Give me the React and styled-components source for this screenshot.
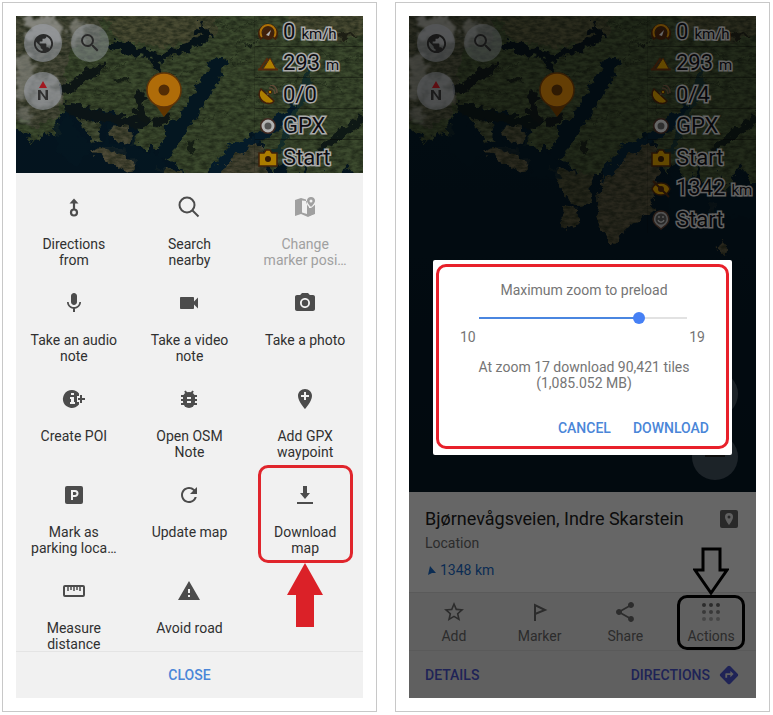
import React, { useId, useState } from "react";
import styled, { createGlobalStyle } from "styled-components";
import {
  MdPublic,
  MdSearch,
  MdMic,
  MdVideocam,
  MdPhotoCamera,
  MdAddLocation,
  MdRefresh,
  MdWarning,
  MdStarOutline,
  MdShare,
  MdDirections,
} from "react-icons/md";

const GlobalStyle = createGlobalStyle`
  *, *::before, *::after { box-sizing: border-box; }
  body {
    margin: 0;
    background: #fff;
    font-family: Roboto, "Liberation Sans", sans-serif;
    font-size: 14px;
    line-height: 16px;
  }
  svg { display: block; }
`;

const PlainButton = styled.button`
  border: 0;
  padding: 0;
  background: none;
  font: inherit;
  color: inherit;
  cursor: pointer;
`;

/* ---------- page ---------- */

const Page = styled.main`
  display: flex;
  gap: 18px;
  padding: 2px 3px 2px 2px;
`;

const Frame = styled.section`
  flex: 1;
  min-width: 0;
  display: flex;
  padding: 13px;
  border: 1px solid #c8c8c8;
`;

const Phone = styled.div`
  position: relative;
  flex: 1;
  min-width: 0;
  display: flex;
  flex-direction: column;
  background: #f1f1f1;
`;

/* ---------- map ---------- */

const MapArea = styled.div`
  position: relative;
  height: ${(p) => p.$height}px;
  overflow: hidden;
  background: #061a28;
`;

const MapSvg = styled.svg`
  width: 100%;
  height: 476px;
`;

const Shade = styled.div`
  position: absolute;
  inset: 0;
  display: flex;
  align-items: center;
  justify-content: center;
  padding: 0 24px;
  background: rgba(0, 0, 0, ${(p) => p.$strength});
`;

const MapControls = styled.div`
  position: absolute;
  top: 8px;
  left: 8px;
  display: grid;
  grid-template-columns: 38px 38px;
  grid-auto-rows: 38px;
  gap: 10px 9px;
`;

const ZoomControls = styled.div`
  position: absolute;
  right: 18px;
  bottom: 12px;
  display: grid;
  grid-auto-rows: 46px;
  grid-template-columns: 46px;
  gap: 17px;
`;

const RoundButton = styled(PlainButton)`
  display: flex;
  align-items: center;
  justify-content: center;
  border-radius: 50%;
  background: rgba(225, 232, 245, ${(p) => p.$alpha || 0.55});
  color: #3c3c3c;
`;

const Widgets = styled.ul`
  position: absolute;
  top: 0;
  right: 0;
  width: 109px;
  margin: 0;
  padding: 0;
  list-style: none;
  border-left: 1px solid rgba(0, 0, 0, 0.15);
`;

const Widget = styled.li`
  display: flex;
  align-items: center;
  gap: 5px;
  height: 31px;
  padding: 4px 0 0 3px;
  border-bottom: ${(p) => (p.$line ? "1px solid rgba(0, 0, 0, 0.35)" : "0")};
  white-space: nowrap;
`;

const WidgetIcon = styled.svg`
  flex: none;
  width: 20px;
  height: 20px;
`;

const WidgetText = styled.span`
  font-size: 22px;
  line-height: 26px;
  color: #14141c;
  -webkit-text-stroke: 3px #f4f4f4;
  paint-order: stroke fill;
`;

const Unit = styled.small`
  margin-left: 6px;
  font-size: 15px;
`;

/* ---------- actions sheet ---------- */

const ActionGrid = styled.div`
  display: grid;
  grid-template-columns: repeat(3, 1fr);
  grid-auto-rows: 96px;
  height: 478px;
`;

const ActionCell = styled.div`
  position: relative;
  display: flex;
`;

const ActionButton = styled(PlainButton)`
  flex: 1;
  display: flex;
  flex-direction: column;
  align-items: center;
  gap: 17px;
  padding-top: 22px;
  color: ${(p) => (p.$muted ? "#a0a0a0" : "#303030")};

  &:disabled { cursor: default; }

  svg {
    width: 24px;
    height: 24px;
    color: ${(p) => (p.$muted ? "#a0a0a0" : "#4c4c4c")};
  }
`;

const ActionLabel = styled.span`
  white-space: pre-line;
`;

const RedOutline = styled.span`
  position: absolute;
  top: 4px;
  left: 11px;
  right: 10px;
  height: 98px;
  border: 3px solid #e0252c;
  border-radius: 10px;
  pointer-events: none;
`;

const RedArrow = styled.svg`
  position: absolute;
  z-index: 1;
  top: 102px;
  left: 50%;
  margin-left: -18px;
  width: 36px;
  height: 65px;
  pointer-events: none;
`;

const SheetFooter = styled.footer`
  flex: 1;
  display: flex;
  min-height: 47px;
  border-top: 1px solid #e4e4e4;
`;

const CloseButton = styled(PlainButton)`
  flex: 1;
  font-weight: 500;
  color: #4a86d8;
`;

/* ---------- location card ---------- */

const Card = styled.div`
  display: flex;
  flex-direction: column;
  background: #fff;
  color: #6e6e6e;
`;

const CardHead = styled.header`
  display: flex;
  justify-content: space-between;
  height: 100px;
  padding: 16px 17px 0 16px;
`;

const CardTitle = styled.h2`
  margin: 0;
  font-size: 18px;
  line-height: 22px;
  font-weight: 400;
  color: #222;
`;

const CardKind = styled.p`
  margin: 5px 0 0;
`;

const Distance = styled.p`
  display: flex;
  align-items: center;
  gap: 4px;
  margin: 11px 0 0;
  padding-left: 3px;
  color: #1c6fd0;
`;

const CardBadge = styled.svg`
  flex: none;
  width: 20px;
  height: 20px;
  margin-top: 1px;
`;

const Tabs = styled.nav`
  display: grid;
  grid-template-columns: repeat(4, 1fr);
  height: 59px;
  padding: 0 2px;
  background: #f1f1f1;
  border-top: 1px solid #e2e2e2;
  border-bottom: 1px solid #e2e2e2;
`;

const Tab = styled(PlainButton)`
  display: flex;
  flex-direction: column;
  align-items: center;
  gap: 4px;
  padding-top: 7px;

  svg {
    width: 24px;
    height: 24px;
    color: #6e6e6e;
  }
`;

const CardFooter = styled.footer`
  display: flex;
  align-items: center;
  justify-content: space-between;
  height: 47px;
  padding: 0 16px;
  background: #f1f1f1;
`;

const CardLink = styled(PlainButton)`
  display: flex;
  align-items: center;
  gap: 8px;
  font-weight: 500;
  color: #4f58d8;

  svg {
    width: 22px;
    height: 22px;
  }
`;

const ActionsMark = styled.div`
  position: absolute;
  right: 11px;
  bottom: 48px;
  width: 68px;
  display: flex;
  flex-direction: column;
  align-items: center;
  pointer-events: none;
`;

const ActionsOutline = styled.span`
  align-self: stretch;
  height: 55px;
  border: 3px solid #000;
  border-radius: 10px;
`;

/* ---------- dialog ---------- */

const Dialog = styled.div`
  flex: 1;
  min-width: 0;
  padding: 4px 3px 6px;
  border-radius: 2px;
  background: #fff;
  color: #757575;
`;

const DialogFrame = styled.div`
  display: flex;
  flex-direction: column;
  height: 185px;
  padding: 15px 17px 0 20px;
  border: 3px solid #e8202a;
  border-radius: 10px;
`;

const DialogTitle = styled.label`
  align-self: center;
  line-height: 16px;
`;

const Slider = styled.input`
  appearance: none;
  height: 12px;
  margin: 14px 20px 0 18px;
  background: linear-gradient(
    to right,
    #4a86e0 ${(p) => p.$fill}%,
    #e2e2e2 ${(p) => p.$fill}%
  ) center / calc(100% - 4px) 2px no-repeat;
  outline: none;

  &::-webkit-slider-thumb {
    appearance: none;
    width: 12px;
    height: 12px;
    border-radius: 50%;
    background: #4680f5;
  }
`;

const SliderEnds = styled.div`
  display: flex;
  justify-content: space-between;
  padding: 0 4px 0 1px;
  margin-top: 5px;
`;

const DialogText = styled.p`
  margin: 14px 0 0;
  text-align: center;
`;

const DialogActions = styled.div`
  display: flex;
  justify-content: flex-end;
  gap: 22px;
  margin-top: 29px;
`;

const DialogButton = styled(PlainButton)`
  font-weight: 500;
  color: #4a86d8;
`;

/* ---------- drawings ---------- */

function SatelliteMap() {
  const id = useId().replace(/[^a-zA-Z0-9]/g, "");
  return (
    <MapSvg viewBox="0 0 347 476" preserveAspectRatio="xMidYMin slice" aria-hidden="true">
      <defs>
        <filter id={`${id}coast`} x="-5%" y="-5%" width="110%" height="110%" colorInterpolationFilters="sRGB">
          <feTurbulence type="fractalNoise" baseFrequency="0.1" numOctaves="4" seed="7" />
          <feDisplacementMap in="SourceGraphic" scale="16" xChannelSelector="R" yChannelSelector="G" result="d" />
          <feTurbulence type="fractalNoise" baseFrequency="0.14 0.3" numOctaves="3" seed="12" />
          <feColorMatrix values="0 0 0 0 0.14  0 0 0 0 0.18  0 0 0 0 0.11  1.4 0 0 0 -0.4" result="n" />
          <feComposite in="n" in2="d" operator="in" result="tex" />
          <feMerge>
            <feMergeNode in="d" />
            <feMergeNode in="tex" />
          </feMerge>
          <feGaussianBlur stdDeviation="0.6" />
        </filter>
        <filter id={`${id}water`} x="-5%" y="-5%" width="110%" height="110%" colorInterpolationFilters="sRGB">
          <feTurbulence type="fractalNoise" baseFrequency="0.12" numOctaves="4" seed="3" />
          <feDisplacementMap in="SourceGraphic" scale="13" xChannelSelector="R" yChannelSelector="G" />
          <feGaussianBlur stdDeviation="0.6" />
        </filter>
        <filter id={`${id}cloud`} x="-20%" y="-20%" width="140%" height="140%" colorInterpolationFilters="sRGB">
          <feTurbulence type="fractalNoise" baseFrequency="0.12" numOctaves="4" seed="5" />
          <feDisplacementMap in="SourceGraphic" scale="24" xChannelSelector="R" yChannelSelector="G" />
          <feGaussianBlur stdDeviation="0.8" />
        </filter>
        <linearGradient id={`${id}sea`} x1="0" y1="0" x2="0" y2="1">
          <stop offset="0" stopColor="#06202f" />
          <stop offset="0.5" stopColor="#061c2b" />
          <stop offset="1" stopColor="#061926" />
        </linearGradient>
      </defs>
      <rect width="347" height="476" fill={`url(#${id}sea)`} />
      <g filter={`url(#${id}coast)`}>
        <path
          fill="#566a42"
          d="M-20-20H370V165L346 168 330 150 322 178 312 158 300 182 290 150 278 172 268 140 258 158 248 128 240 118 222 128 206 142 194 158 172 158 156 146 146 132 152 116 146 132 128 132 118 128 122 106 106 110 98 98 76 96 54 88 48 98 40 106 42 122 27 115 18 127 10 117 -20 104Z"
        />
        <path fill="#626f4c" d="M54 92 70 98 86 112 84 126 76 124 66 110Z" />
        <path fill="#68684c" d="M94 110 112 108 118 120 108 128 92 122Z" />
        <path fill="#706b50" d="M74 132 90 134 106 134 120 148 114 154 96 148 84 142Z" />
        <path fill="#5c5e42" d="M140 148 160 156 182 158 184 178 172 192 160 186 152 172Z" />
        <path fill="#625f44" d="M153 188 168 194 170 208 160 216 154 204Z" />
        <path
          fill="#67634a"
          d="M186 200 190 174 204 148 221 132 238 124 248 132 250 164 240 197 214 216 204 228 194 216Z"
        />
        <path fill="#67634a" d="M300 184 308 186 306 202 300 198ZM312 226 318 230 316 238 310 234Z" />
        <path fill="#7a7050" opacity="0.6" d="M86-10H200V20L160 30 120 28 94 18ZM270-10H350V20L320 24 280 14Z" />
        <path fill="#6c6b55" opacity="0.9" d="M-10-10H90L84 24 56 34 48 60 44 100 20 112 -10 100Z" />
      </g>
      <g filter={`url(#${id}water)`} fill="#07202f">
        <path fill="#0a1a22" d="M94 23 117 31 145 36 165 30 180 20 184 8 194 12 198 22 186 28 170 36 148 42 142 54 136 52 134 42 112 38 94 32Z" />
        <path fill="#141f1e" d="M46 70 58 62 76 52 92 44 84 58 70 66 58 76 46 78Z" />
        <path d="M202 41 211 46 204 60 194 78 184 98 174 111 161 128 153 146 143 138 151 109 164 99 174 80 184 67 194 46Z" />
        <path fill="#101e20" d="M48 86 72 92 98 98 120 100 136 106 124 112 100 108 72 104 50 98Z" />
        <path fill="#141f1e" d="M120 72 132 80 128 92 134 104 124 106 118 96 122 84ZM136 104 152 98 156 104 140 110Z" />
        <path d="M40 108 52 98 60 112 70 128 88 130 90 108 96 108 92 124 108 130 118 122 126 134 148 140 150 162 124 160 112 140 76 130 60 150 40 134Z" opacity="0.8" />
        <path fill="#08283c" d="M192 166 200 146 214 132 240 118 262 98 280 88 276 100 260 116 232 132 216 142 204 158Z" />
        <path fill="#1e3f3c" d="M280 90 288 66 290 40 295 40 293 68 286 92 268 130 258 148 252 146Z" />
        <path fill="#15231f" d="M302 132 318 118 350 96 350 103 322 126 306 137Z" />
        <path fill="#2a2c1e" d="M312 20 328 16 340 18 328 24Z" />
        <path d="M262 164 268 150 274 172 284 158 292 178 304 162 314 180 330 160 350 176 350 200 260 200Z" opacity="0.8" />
        <path fill="#1e2a1e" d="M96 62 104 60 116 64 104 66ZM226 28 242 24 236 32ZM170 128 182 122 176 138Z" />
      </g>
      <g fill="none" stroke="#26331f" strokeWidth="1" opacity="0.6" filter={`url(#${id}water)`}>
        <path d="M190 14 204 6 220 16 238 4M226 20 214 48 236 44M238 60 262 72 290 60 330 76M220 86 240 78 250 98M66 44 90 54 112 48M140 62 160 58 180 54M300 30 320 46 346 40M184 110 200 96 214 100M60 84 80 76 110 80" />
      </g>
      <g fill="#d4d4cc" filter={`url(#${id}cloud)`} opacity="0.8">
        <path d="M12 2 40 0 50 14 42 28 20 26 8 14Z" />
        <path d="M54 2 68 6 70 24 56 28Z" opacity="0.7" />
        <path d="M0 40 14 36 18 60 12 84 0 80Z" opacity="0.7" />
        <path d="M18 58 38 60 46 80 28 94 16 84Z" opacity="0.6" />
        <path d="M2 92 12 90 20 104 10 110Z" opacity="0.5" />
      </g>
      <path d="M139 88H158L148 101Z" fill="#8a4c00" />
      <circle cx="148" cy="74" r="17" fill="#fb9b0e" stroke="#8a4c0c" strokeWidth="1.5" />
      <circle cx="148" cy="74" r="5.5" fill="#774108" />
    </MapSvg>
  );
}

const glyphs = {
  speed: (
    <>
      <path d="M4 16a8 8 0 1 1 12 0" fill="none" stroke="#5c2f10" strokeWidth="4" />
      <path d="M4 14a7.500 7.500 0 1 1 12 0" fill="none" stroke="#f5a30c" strokeWidth="2" />
      <circle cx="10" cy="11" r="6" fill="#5c2f10" />
      <path d="M8 12 13 7 11 13Z" fill="#fff" />
    </>
  ),
  altitude: (
    <>
      <path d="M2 15 9 5 11 7M0 15.500H20" fill="none" stroke="#7a3d14" strokeWidth="2" />
      <path d="M5 15 12 4 18 15Z" fill="#f7b500" stroke="#7a3d14" strokeWidth="1" />
    </>
  ),
  satellite: (
    <>
      <path d="M3 4C-1 9 2 16 8 18c4 1 7 0 8-2Z" fill="#f7b500" stroke="#5c2f10" strokeWidth="1.500" />
      <path d="M9 10 12 7M11 3c4 0 6 3 6 6M12 0c5 0 7 4 7 8" fill="none" stroke="#8a6a50" strokeWidth="1.500" />
      <circle cx="12" cy="7" r="1.800" fill="#f7b500" stroke="#5c2f10" />
    </>
  ),
  record: (
    <>
      <circle cx="10" cy="10" r="6" fill="#777" stroke="#5c3b30" strokeWidth="4" />
      <circle cx="10" cy="10" r="5" fill="#777" stroke="#fff" strokeWidth="3" />
    </>
  ),
  camera: (
    <>
      <path d="M1 5H6L8 2H12L14 5H19V18H1Z" fill="#f5b200" stroke="#5c2f10" strokeWidth="1.500" />
      <circle cx="10" cy="11" r="3" fill="#4b2708" />
    </>
  ),
  target: (
    <>
      <path d="M1 10C4 2 16 2 19 10 16 18 4 18 1 10Z" fill="#f7b500" stroke="#5c2f10" strokeWidth="1.500" />
      <path d="M2 2 18 18" stroke="#5c2f10" strokeWidth="2" />
      <circle cx="10" cy="10" r="3" fill="#5c2f10" />
    </>
  ),
  mood: (
    <>
      <path d="M10 1a8 8 0 0 1 5 14L10 19 5 15A8 8 0 0 1 10 1Z" fill="#ccc" stroke="#6b4a3a" strokeWidth="1.500" />
      <circle cx="10" cy="9" r="5.500" fill="#666" />
      <path d="M8 6v2M12 6v2M7 10c1 3 5 3 6 0" fill="none" stroke="#eee" strokeWidth="1.300" />
    </>
  ),
};

const DirectionsFromIcon = () => (
  <svg viewBox="0 0 24 24" fill="none" stroke="currentColor" strokeWidth="2.200" aria-hidden="true">
    <circle cx="12" cy="17.500" r="3" />
    <path d="M12 15V7" />
    <path d="M12 3.500 16.500 8.500H7.500Z" fill="currentColor" stroke="none" />
  </svg>
);

const MapPinIcon = () => (
  <svg viewBox="0 0 24 24" fill="currentColor" aria-hidden="true">
    <path d="M2 5 8 3 13 4.500C13 8 14 10 16 12V20L22 17V10L21 11V19L15 22 8 19 2 21ZM9 5.500V17.500L14 19V6Z" fillRule="evenodd" />
    <path d="M18 2a3.800 3.800 0 0 1 4 4c0 2-4 6-4 6s-4-4-4-6a3.800 3.800 0 0 1 4-4Zm0 2.500a1.500 1.500 0 1 0 0 3 1.500 1.500 0 0 0 0-3Z" fillRule="evenodd" />
    <path d="M16 13H18L22 10V19L16 21Z" />
  </svg>
);

const PoiIcon = () => (
  <svg viewBox="0 0 24 24" fill="currentColor" aria-hidden="true">
    <path d="M10 3a9 9 0 0 1 7 3.500V9h-2v6h2v2.500A9 9 0 1 1 10 3Z" />
    <path d="M9 6h3v2H9ZM8 10h4v5h1v2H8v-2h1v-3H8Z" fill="#f1f1f1" />
    <path d="M18 8h2v3h3v2h-3v3h-2v-3h-2v-2h2Z" />
  </svg>
);

const BugIcon = () => (
  <svg viewBox="0 0 24 24" aria-hidden="true">
    <path d="M4 9H20M4 13H20M4 17H20M8 4 10 7M16 4 14 7" fill="none" stroke="currentColor" strokeWidth="2" />
    <path d="M12 5a6 5 0 0 1 6 5v5a6 6 0 0 1-12 0v-5a6 5 0 0 1 6-5Z" fill="currentColor" />
    <path d="M10 11H14M10 15H14" stroke="#f1f1f1" strokeWidth="2" />
  </svg>
);

const ParkingIcon = () => (
  <svg viewBox="0 0 24 24" aria-hidden="true">
    <rect x="3" y="3" width="18" height="18" rx="2" fill="currentColor" />
    <path d="M10 17V8h3a2.500 2.500 0 0 1 0 5h-3" fill="none" stroke="#f1f1f1" strokeWidth="2" />
  </svg>
);

const DownloadIcon = () => (
  <svg viewBox="0 0 24 24" fill="currentColor" aria-hidden="true">
    <path d="M10 3h4v7h3l-5 6-5-6h3ZM4 19h16v2H4Z" />
  </svg>
);

const RulerIcon = () => (
  <svg viewBox="0 0 24 24" fill="none" stroke="currentColor" strokeWidth="2" aria-hidden="true">
    <rect x="2" y="7" width="20" height="10" rx="1" />
    <path d="M6 7v5M9 7v4M12 7v5M15 7v4M18 7v5" strokeWidth="1.500" />
  </svg>
);

const ThinSearchIcon = () => (
  <svg viewBox="0 0 24 24" fill="none" stroke="currentColor" strokeWidth="2" aria-hidden="true">
    <circle cx="10" cy="10" r="7.500" />
    <path d="M15.500 15.500 21.500 21.500" />
  </svg>
);

const FlagIcon = () => (
  <svg viewBox="0 0 24 24" fill="none" stroke="currentColor" strokeWidth="2" aria-hidden="true">
    <path d="M7 21V5L17 10 7 14" />
  </svg>
);

const DotsIcon = () => (
  <svg viewBox="0 0 24 24" fill="currentColor" aria-hidden="true">
    {[5, 12, 19].map((y, row) =>
      [5, 12, 19].map((x) => <circle key={`${x}-${y}`} cx={x} cy={y} r="2" opacity={1 - row * 0.25} />)
    )}
  </svg>
);

const CompassIcon = () => (
  <svg width="20" height="24" viewBox="0 0 20 24" aria-hidden="true">
    <path d="M10 2 14 9H6Z" fill="#e8232f" />
    <path d="M5 21V11H7.500L12.500 18V11H15V21H12.500L7.500 14V21Z" fill="#444" />
  </svg>
);

/* ---------- data ---------- */

const actions = [
  { label: "Directions\nfrom", icon: DirectionsFromIcon },
  { label: "Search\nnearby", icon: ThinSearchIcon },
  { label: "Change\nmarker posi…", icon: MapPinIcon, muted: true },
  { label: "Take an audio\nnote", icon: MdMic },
  { label: "Take a video\nnote", icon: MdVideocam },
  { label: "Take a photo", icon: MdPhotoCamera },
  { label: "Create POI", icon: PoiIcon },
  { label: "Open OSM\nNote", icon: BugIcon },
  { label: "Add GPX\nwaypoint", icon: MdAddLocation },
  { label: "Mark as\nparking loca…", icon: ParkingIcon },
  { label: "Update map", icon: MdRefresh },
  { label: "Download\nmap", icon: DownloadIcon, marked: true },
  { label: "Measure\ndistance", icon: RulerIcon },
  { label: "Avoid road", icon: MdWarning },
];

const baseWidgets = (satellites) => [
  { icon: "speed", value: "0", unit: "km/h", line: true },
  { icon: "altitude", value: "293", unit: "m", line: true },
  { icon: "satellite", value: satellites, line: true },
  { icon: "record", value: "GPX", line: true },
  { icon: "camera", value: "Start" },
];

const closedWidgets = baseWidgets("0/0");
const openWidgets = [
  ...baseWidgets("0/4"),
  { icon: "target", value: "1342", unit: "km" },
  { icon: "mood", value: "Start" },
];

const tabs = [
  { label: "Add", icon: MdStarOutline },
  { label: "Marker", icon: FlagIcon },
  { label: "Share", icon: MdShare },
  { label: "Actions", icon: DotsIcon },
];

/* ---------- views ---------- */

function MapView({ height, widgets, zoomButtons, shade }) {
  return (
    <MapArea $height={height}>
      <SatelliteMap />
      <MapControls>
        <RoundButton aria-label="Configure map"><MdPublic size={23} /></RoundButton>
        <RoundButton aria-label="Search" $alpha={0.45}><MdSearch size={24} /></RoundButton>
        <RoundButton aria-label="Compass"><CompassIcon /></RoundButton>
      </MapControls>
      <Widgets>
        {widgets.map((w, i) => (
          <Widget key={i} $line={w.line}>
            <WidgetIcon viewBox="0 0 20 20" aria-hidden="true">{glyphs[w.icon]}</WidgetIcon>
            <WidgetText>
              {w.value}
              {w.unit && <Unit>{w.unit}</Unit>}
            </WidgetText>
          </Widget>
        ))}
      </Widgets>
      {zoomButtons && (
        <ZoomControls>
          <RoundButton aria-label="Zoom in" $alpha={0.3} />
          <RoundButton aria-label="Zoom out" $alpha={0.3}>
            <svg width="20" height="20" viewBox="0 0 20 20" aria-hidden="true">
              <path d="M0 9H20" stroke="#222" strokeWidth="2" />
            </svg>
          </RoundButton>
        </ZoomControls>
      )}
      {shade && <Shade $strength={shade} />}
    </MapArea>
  );
}

function ActionsPhone() {
  return (
    <Phone>
      <MapView height={157} widgets={closedWidgets} shade={0.3} />
      <ActionGrid>
        {actions.map(({ label, icon: Icon, muted, marked }) => (
          <ActionCell key={label}>
            <ActionButton $muted={muted} disabled={muted}>
              <Icon />
              <ActionLabel>{label}</ActionLabel>
            </ActionButton>
            {marked && (
              <>
                <RedOutline />
                <RedArrow viewBox="0 0 36 65" aria-hidden="true">
                  <path d="M18 0 36 32H27V64H9V32H0Z" fill="#db2128" />
                </RedArrow>
              </>
            )}
          </ActionCell>
        ))}
      </ActionGrid>
      <SheetFooter>
        <CloseButton>CLOSE</CloseButton>
      </SheetFooter>
    </Phone>
  );
}

function DownloadDialog() {
  const [zoom, setZoom] = useState(17);
  return (
    <Dialog role="dialog" aria-labelledby="zoom-title">
      <DialogFrame>
        <DialogTitle id="zoom-title" htmlFor="zoom">Maximum zoom to preload</DialogTitle>
        <Slider
          id="zoom"
          type="range"
          min="10"
          max="19"
          value={zoom}
          $fill={((zoom - 10) / 9) * 100}
          onChange={(e) => setZoom(Number(e.target.value))}
        />
        <SliderEnds>
          <span>10</span>
          <span>19</span>
        </SliderEnds>
        <DialogText>
          At zoom {zoom} download 90,421 tiles
          <br />
          (1,085.052 MB)
        </DialogText>
        <DialogActions>
          <DialogButton>CANCEL</DialogButton>
          <DialogButton>DOWNLOAD</DialogButton>
        </DialogActions>
      </DialogFrame>
    </Dialog>
  );
}

function DownloadPhone() {
  return (
    <Phone>
      <MapView height={476} widgets={openWidgets} zoomButtons />
      <Card>
        <CardHead>
          <div>
            <CardTitle>Bjørnevågsveien, Indre Skarstein</CardTitle>
            <CardKind>Location</CardKind>
            <Distance>
              <svg width="8" height="9" viewBox="0 0 8 9" aria-hidden="true">
                <path d="M2 0 8 7 4 7 0 9Z" fill="currentColor" />
              </svg>
              1348 km
            </Distance>
          </div>
          <CardBadge viewBox="0 0 20 20" aria-hidden="true">
            <rect x="1" y="1" width="18" height="18" rx="2" fill="#666" />
            <path d="M10 4a4 4 0 0 1 4 4c0 3-4 8-4 8S6 11 6 8a4 4 0 0 1 4-4Z" fill="#f0f0f0" />
            <circle cx="10" cy="8" r="1.500" fill="#666" />
          </CardBadge>
        </CardHead>
        <Tabs>
          {tabs.map(({ label, icon: Icon }) => (
            <Tab key={label}>
              <Icon />
              {label}
            </Tab>
          ))}
        </Tabs>
        <CardFooter>
          <CardLink>DETAILS</CardLink>
          <CardLink>
            DIRECTIONS
            <MdDirections />
          </CardLink>
        </CardFooter>
      </Card>
      <Shade $strength={0.6}>
        <DownloadDialog />
      </Shade>
      <ActionsMark>
        <svg width="36" height="48" viewBox="0 0 36 48" aria-hidden="true">
          <path d="M10 2H27V23H34L18 46 2 23H10Z" fill="none" stroke="#000" strokeWidth="3" />
        </svg>
        <ActionsOutline />
      </ActionsMark>
    </Phone>
  );
}

export default function App() {
  return (
    <>
      <GlobalStyle />
      <Page>
        <Frame><ActionsPhone /></Frame>
        <Frame><DownloadPhone /></Frame>
      </Page>
    </>
  );
}
